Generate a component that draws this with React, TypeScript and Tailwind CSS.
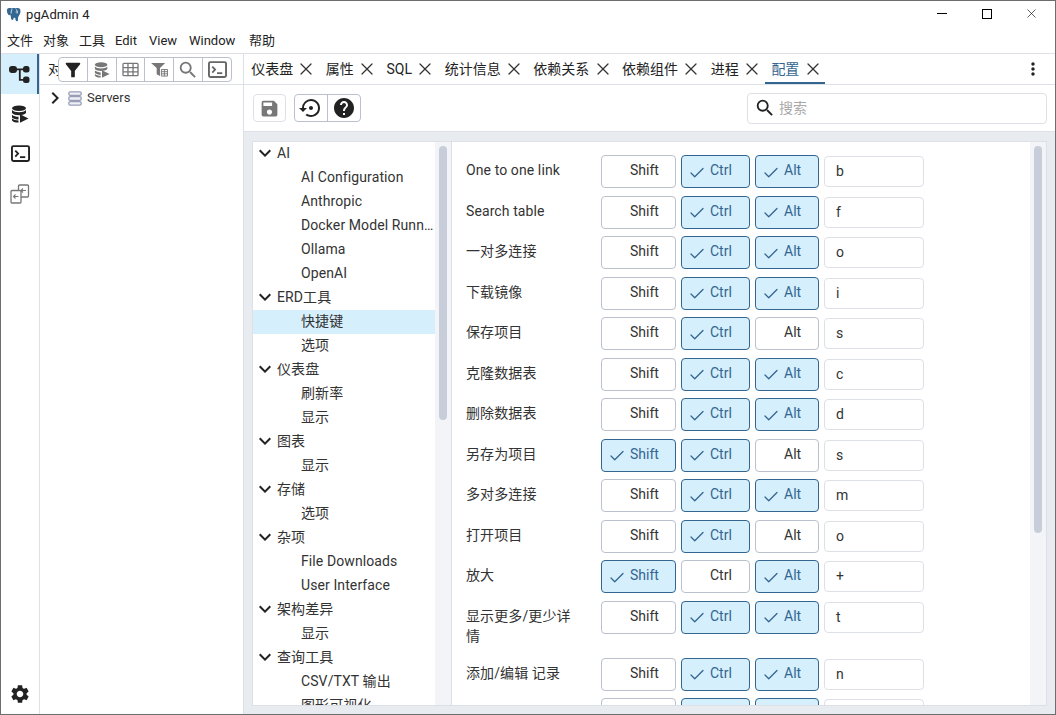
import { Check, X } from "lucide-react"
import {
  MdFilterAlt,
  MdHelp,
  MdKeyboardArrowDown,
  MdKeyboardArrowRight,
  MdMoreVert,
  MdSave,
  MdSearch,
  MdSettings,
  MdSettingsBackupRestore,
} from "react-icons/md"

const font = "font-['Roboto','Noto_Sans_CJK_SC',sans-serif]"

const menus: [string, string][] = [
  ["文件", "w-[36px]"],
  ["对象", "w-[36px]"],
  ["工具", "w-[36px]"],
  ["Edit", "w-[34px]"],
  ["View", "w-[40px]"],
  ["Window", "w-[60px]"],
  ["帮助", "w-[36px]"],
]
const tabs = ["仪表盘", "属性", "SQL", "统计信息", "依赖关系", "依赖组件", "进程", "配置"]

const tree: [string, string[]][] = [
  ["AI", ["AI Configuration", "Anthropic", "Docker Model Runner", "Ollama", "OpenAI"]],
  ["ERD工具", ["快捷键", "选项"]],
  ["仪表盘", ["刷新率", "显示"]],
  ["图表", ["显示"]],
  ["存储", ["选项"]],
  ["杂项", ["File Downloads", "User Interface"]],
  ["架构差异", ["显示"]],
  ["查询工具", ["CSV/TXT 输出", "图形可视化"]],
]

type Row = { label: string; shift: boolean; ctrl: boolean; alt: boolean; key: string; tall?: boolean }

const rows: Row[] = [
  { label: "One to one link", shift: false, ctrl: true, alt: true, key: "b" },
  { label: "Search table", shift: false, ctrl: true, alt: true, key: "f" },
  { label: "一对多连接", shift: false, ctrl: true, alt: true, key: "o" },
  { label: "下载镜像", shift: false, ctrl: true, alt: true, key: "i" },
  { label: "保存项目", shift: false, ctrl: true, alt: false, key: "s" },
  { label: "克隆数据表", shift: false, ctrl: true, alt: true, key: "c" },
  { label: "删除数据表", shift: false, ctrl: true, alt: true, key: "d" },
  { label: "另存为项目", shift: true, ctrl: true, alt: false, key: "s" },
  { label: "多对多连接", shift: false, ctrl: true, alt: true, key: "m" },
  { label: "打开项目", shift: false, ctrl: true, alt: false, key: "o" },
  { label: "放大", shift: true, ctrl: false, alt: true, key: "+" },
  { label: "显示更多/更少详情", shift: false, ctrl: true, alt: true, key: "t", tall: true },
  { label: "添加/编辑 记录", shift: false, ctrl: true, alt: true, key: "n" },
  { label: "", shift: false, ctrl: true, alt: true, key: "" },
]

function Elephant() {
  return (
    <svg viewBox="0 0 16 16" className="w-[16px] h-[16px]">
      <path
        d="M3.2 1C1.4 1 .6 2.6 1 4.6c.3 1.7 1 3.2 1.9 3.6.6.2 1-.2 1.3-.8.2.8.6 1.6.7 2.8.1 1.400.500 2.800 1.600 2.800.9 0 1.100-1 1.100-2.200.7.1 1.100.1 1.600 0 0 1.600.5 3.500 1.700 3.500 1 0 1.200-1.200 1.100-2.600-.1-1 .2-1.800.9-2.900.9-1.300 1.800-3 1.500-4.800C14.700 2 13.400 1 11.600 1c-.7 0-1.400.2-1.900.4C9.100 1.100 8.400 1 7.700 1c-.6 0-1.200.2-1.700.4C5.200 1.100 4.200 1 3.200 1z"
        fill="#336791"
      />
      <path d="M6.200 2.200c-1 1-1.200 2.800-.9 4.300M10 2.400c1.300.8 1.600 2.400 1.200 4.100" stroke="#fff" strokeWidth=".8" fill="none" />
      <circle cx="10.200" cy="5" r=".6" fill="#fff" />
    </svg>
  )
}

function ExplorerIcon() {
  return (
    <svg viewBox="0 0 22 20" className="w-[22px] h-[20px]" fill="#222">
      <rect x="1" y="2" width="8" height="7" rx="3" />
      <rect x="15" y="2" width="6.500" height="6.500" rx="2.500" />
      <rect x="15" y="12.500" width="6.500" height="6.500" rx="2.500" />
      <path d="M8 5.300h8M11.800 5.300v10.500h4" stroke="#222" strokeWidth="1.800" fill="none" />
    </svg>
  )
}

function QueryIcon({ color, size }: { color: string; size: number }) {
  return (
    <svg viewBox="0 0 18 18" width={size} height={size} fill={color}>
      <ellipse cx="8" cy="3.200" rx="7" ry="2.800" />
      <path d="M1 5c1.500 1.600 4 2.200 7 2.200S13.500 6.600 15 5v3c-1.500 1.600-4 2.200-7 2.200S2.500 9.600 1 8z" />
      <path d="M1 9.700c1.500 1.400 4 2 6.500 2v2.800c-2.500 0-5-.6-6.500-2z" />
      <path d="M1 13.500c1.500 1.300 4 2 6.500 2v2c-3.500 0-6.500-1-6.500-2.600z" />
      <path d="M9 9.200l8.500 4.200L9 17.800z" />
    </svg>
  )
}

function TerminalIcon({ color, size }: { color: string; size: number }) {
  return (
    <svg viewBox="0 0 20 18" width={size} height={size * 0.9} fill="none" stroke={color}>
      <rect x="1" y="1.200" width="18" height="15.600" rx="1.500" strokeWidth="2" />
      <path d="M4.500 5.800l3 3.200-3 3.200" strokeWidth="1.900" />
      <path d="M9.500 12.800h5.500" strokeWidth="1.900" />
    </svg>
  )
}

function SchemaDiffIcon() {
  return (
    <svg viewBox="0 0 20 20" className="w-[20px] h-[20px]" fill="none" stroke="#777" strokeWidth="1.300">
      <rect x="8.500" y="1" width="10" height="12" rx="1" fill="#fff" />
      <rect x="1" y="6.500" width="10" height="12.500" rx="1" fill="#fff" />
      <path d="M16 6.500h-5M13 4.500l-2 2 2 2M8.500 12.500h-5M5.500 10.500l-2 2 2 2" strokeWidth="1.100" />
    </svg>
  )
}

function GridIcon() {
  return (
    <svg viewBox="0 0 18 16" className="w-[17px] h-[15px]" fill="none" stroke="#777" strokeWidth="1.400">
      <rect x="1" y="1.500" width="16" height="13" rx="1" />
      <path d="M1 6h16M1 10.500h16M6.300 1.500v13M11.700 1.500v13" />
    </svg>
  )
}

function TableFilterIcon() {
  return (
    <svg viewBox="0 0 18 16" className="w-[17px] h-[15px]" fill="#777">
      <path d="M0 1h15l-5.500 5.500V15L6 13V6.500z" />
      <path d="M10.500 7.500H18v8h-7.500z" fill="#fff" />
      <path d="M11 8h6.500v7H11zM11 10.300h6.500M11 12.600h6.500M14.200 8v7" stroke="#777" fill="none" strokeWidth="1" />
    </svg>
  )
}

function ServersIcon() {
  return (
    <svg viewBox="0 0 14 15" className="w-[14px] h-[15px]" fill="#eef0f6" stroke="#9a9db8" strokeWidth="1.300">
      <rect x="0.800" y="0.800" width="12.400" height="3.600" rx="1.400" />
      <rect x="0.800" y="5.700" width="12.400" height="3.600" rx="1.400" />
      <rect x="0.800" y="10.600" width="12.400" height="3.600" rx="1.400" />
    </svg>
  )
}

function ToggleKey({ label, on, width }: { label: string; on: boolean; width: string }) {
  return (
    <div
      className={`${width} h-[33px] shrink-0 rounded-[4px] border flex items-center pl-[6px] text-[14px] ${
        on ? "bg-[#d6effc] border-[#326690] text-[#326690]" : "bg-white border-[#bac1cd] text-[#333]"
      }`}
    >
      <span className="w-[18px] shrink-0 flex relative top-[1px]">{on && <Check size={18} strokeWidth={1.700} />}</span>
      <span className="ml-[4px] relative top-[-1px]">{label}</span>
    </div>
  )
}

function ShortcutRow({ row }: { row: Row }) {
  return (
    <div className={`flex items-start shrink-0 ${row.tall ? "h-[57px]" : "h-[40.5px]"}`}>
      <div className="w-[113px] mr-[22px] mt-[5px] leading-[20px] text-[14px] tracking-[0.1px] text-[#333]">{row.label}</div>
      <div className="flex gap-[5px]">
        <ToggleKey label="Shift" on={row.shift} width="w-[75px]" />
        <ToggleKey label="Ctrl" on={row.ctrl} width="w-[69px]" />
        <ToggleKey label="Alt" on={row.alt} width="w-[64px]" />
        <div className="w-[100px] h-[31px] mt-px rounded-[4px] border border-[#dde0e6] pl-[11px] flex items-center text-[14px] text-[#333]">
          {row.key}
        </div>
      </div>
    </div>
  )
}

export default function App() {
  return (
    <div className={`${font} w-[1056px] h-[715px] flex flex-col overflow-hidden bg-white border border-[#6d6d6d] text-[#222]`}>
      {/* title bar */}
      <div className="h-[27px] shrink-0 flex items-center pl-[5px]">
        <Elephant />
        <span className="ml-[4px] text-[13px] tracking-[0.1px]">pgAdmin 4</span>
        <div className="ml-auto flex items-center text-black pb-[2px]">
          <div className="w-[45px] h-[25px] flex items-center justify-center">
            <div className="w-[10px] h-px bg-black" />
          </div>
          <div className="w-[45px] h-[25px] flex items-center justify-center">
            <div className="w-[10px] h-[10px] border border-black" />
          </div>
          <div className="w-[45px] h-[25px] flex items-center justify-center mr-px">
            <X size={15} strokeWidth={1} />
          </div>
        </div>
      </div>

      {/* menu bar */}
      <div className="h-[26px] shrink-0 flex items-center pl-[6px] text-[13px] border-b border-[#dde0e6]">
        {menus.map(([m, w]) => (
          <span key={m} className={w}>
            {m}
          </span>
        ))}
      </div>

      <div className="flex-1 flex min-h-0">
        {/* icon rail */}
        <div className="w-[39px] shrink-0 flex flex-col border-r border-[#dde0e6]">
          <div className="h-[40px] bg-[#d6effc] border-r-[2px] border-[#326690] flex items-center justify-center">
            <ExplorerIcon />
          </div>
          <div className="h-[40px] flex items-center justify-center">
            <QueryIcon color="#222" size={18} />
          </div>
          <div className="h-[40px] flex items-center justify-center">
            <TerminalIcon color="#222" size={19} />
          </div>
          <div className="h-[40px] flex items-center justify-center">
            <SchemaDiffIcon />
          </div>
          <div className="mt-auto h-[40px] flex items-center justify-center">
            <MdSettings size={22} color="#222" />
          </div>
        </div>

        {/* object explorer */}
        <div className="w-[204px] shrink-0 relative border-r border-[#dde0e6]">
          <div className="h-[31px] border-b border-[#dde0e6] pl-[8px] flex items-center text-[14px]">对象</div>
          <div className="flex items-center h-[26px] pl-[6px] text-[13px] text-[#333]">
            <MdKeyboardArrowRight size={24} color="#222" className="-mx-[3px]" />
            <span className="ml-[4px]">
              <ServersIcon />
            </span>
            <span className="ml-[5px]">Servers</span>
          </div>
          <div className="absolute left-[18px] top-[3px] w-[174px] h-[25px] flex bg-white border border-[#bac1cd] rounded-[4px] divide-x divide-[#bac1cd]">
            <div className="flex-1 flex items-center justify-center">
              <MdFilterAlt size={22} color="#222" />
            </div>
            <div className="flex-1 flex items-center justify-center">
              <QueryIcon color="#777" size={16} />
            </div>
            <div className="flex-1 flex items-center justify-center">
              <GridIcon />
            </div>
            <div className="flex-1 flex items-center justify-center">
              <TableFilterIcon />
            </div>
            <div className="flex-1 flex items-center justify-center">
              <MdSearch size={22} color="#777" />
            </div>
            <div className="flex-1 flex items-center justify-center">
              <TerminalIcon color="#666" size={19} />
            </div>
          </div>
        </div>

        {/* main panel */}
        <div className="flex-1 min-w-0 flex flex-col">
          <div className="h-[31px] shrink-0 flex items-stretch pl-[0.500px] pr-[12px] border-b border-[#dde0e6]">
            {tabs.map((t) => {
              const active = t === "配置"
              return (
                <div
                  key={t}
                  className={`flex items-center gap-[7.300px] px-[6.700px] pt-[2px] text-[14px] border-b-[2px] ${
                    active ? "border-[#326690] text-[#326690]" : "border-transparent text-[#222]"
                  }`}
                >
                  {t}
                  <X size={20} strokeWidth={1.500} className="-mx-[4px] text-[#333]" />
                </div>
              )
            })}
            <div className="ml-auto flex items-center">
              <MdMoreVert size={20} color="#222" />
            </div>
          </div>

          <div className="h-[47px] shrink-0 flex items-center pl-[9px] pr-[8px] border-b border-[#dde0e6]">
            <div className="w-[33px] h-[28px] rounded-[4px] border border-[#dde0e6] flex items-center justify-center">
              <MdSave size={21} color="#777" />
            </div>
            <div className="ml-[8px] w-[67px] h-[28px] flex rounded-[4px] border border-[#bac1cd] divide-x divide-[#bac1cd]">
              <div className="flex-1 flex items-center justify-center">
                <MdSettingsBackupRestore size={24} color="#222" />
              </div>
              <div className="flex-1 flex items-center justify-center">
                <MdHelp size={24} color="#222" />
              </div>
            </div>
            <div className="ml-auto w-[300px] h-[31px] rounded-[4px] border border-[#dde0e6] flex items-center pl-[6px] text-[14px] text-[#aaa]">
              <MdSearch size={22} color="#222" />
              <span className="ml-[3px]">搜索</span>
            </div>
          </div>

          {/* preferences body */}
          <div className="flex-1 min-h-0 bg-[#e8ebf0] flex pl-[8px] pt-[9px] pb-[8px] pr-[8px]">
            <div className="w-[199px] shrink-0 flex bg-white border border-[#dde0e6] border-r-0 overflow-hidden">
              <div className="w-[182px] shrink-0 text-[14px] tracking-[0.1px] text-[#333]">
                {tree.map(([group, items]) => (
                  <div key={group}>
                    <div className="h-[24px] flex items-center pb-[2px]">
                      <MdKeyboardArrowDown size={24} color="#222" />
                      <span>{group}</span>
                    </div>
                    {items.map((item) => (
                      <div
                        key={item}
                        className={`h-[24px] flex items-center pl-[48px] pb-[2px] ${item === "快捷键" ? "bg-[#d6effc]" : ""}`}
                      >
                        <span className="truncate">{item}</span>
                      </div>
                    ))}
                  </div>
                ))}
              </div>
              <div className="flex-1 bg-[#f3f4f7] pt-[4px] pl-[4px]">
                <div className="w-[8px] h-[274px] rounded-[4px] bg-[#c8ced9]" />
              </div>
            </div>

            <div className="flex-1 min-w-0 flex bg-white border border-[#dde0e6] overflow-hidden">
              <div className="flex-1 min-w-0 flex flex-col pl-[14px] pt-[13px]">
                {rows.map((row, i) => (
                  <ShortcutRow key={i} row={row} />
                ))}
              </div>
              <div className="w-[16px] shrink-0 bg-[#f3f4f7] pt-[4px] pl-[4px]">
                <div className="w-[8px] h-[387px] rounded-[4px] bg-[#c8ced9]" />
              </div>
            </div>
          </div>
        </div>
      </div>
    </div>
  )
}
